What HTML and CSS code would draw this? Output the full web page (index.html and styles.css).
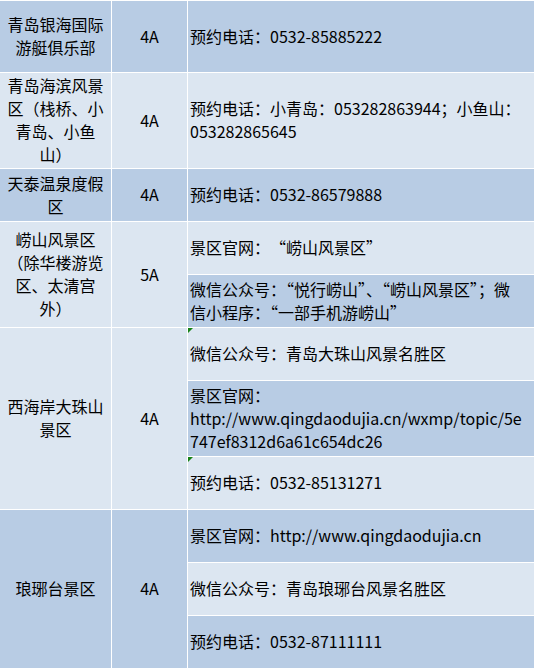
FILE: index.html
```html
<!DOCTYPE html>
<html lang="zh-CN">
<head>
<meta charset="utf-8">
<title>青岛景区</title>
<link rel="stylesheet" href="styles.css">
</head>
<body>
<div class="sheet">
  <div class="name dark">青岛银海国际游艇俱乐部</div>
  <div class="level dark">4A</div>
  <div class="info dark">预约电话：0532-85885222</div>

  <div class="name light">青岛海滨风景区（栈桥、小青岛、小鱼山）</div>
  <div class="level light">4A</div>
  <div class="info light">预约电话：小青岛：053282863944；小鱼山：<br>053282865645</div>

  <div class="name dark">天泰温泉度假区</div>
  <div class="level dark">4A</div>
  <div class="info dark">预约电话：0532-86579888</div>

  <div class="name light span2">崂山风景区（除华楼游览区、太清宫外）</div>
  <div class="level light span2">5A</div>
  <div class="info light untrim">景区官网：“崂山风景区”</div>
  <div class="info dark">微信公众号：“悦行崂山”、“崂山风景区”；微<br>信小程序：“一部手机游崂山”</div>

  <div class="name light span3">西海岸大珠山景区</div>
  <div class="level light span3">4A</div>
  <div class="info light mark">微信公众号：青岛大珠山风景名胜区</div>
  <div class="info dark">景区官网：<br>http://www.qingdaodujia.cn/wxmp/topic/5e<br>747ef8312d6a61c654dc26</div>
  <div class="info light mark">预约电话：0532-85131271</div>

  <div class="name dark span3">琅琊台景区</div>
  <div class="level dark span3">4A</div>
  <div class="info dark">景区官网：http://www.qingdaodujia.cn</div>
  <div class="info light">微信公众号：青岛琅琊台风景名胜区</div>
  <div class="info dark">预约电话：0532-87111111</div>
</div>
</body>
</html>
```

FILE: styles.css
```css
html, body {
  margin: 0;
  padding: 0;
  background: #ffffff;
}

.sheet {
  display: grid;
  grid-template-columns: 111px 75px 346px;
  grid-template-rows: 71px 95px 52px 52px 52px 52px 75px 52px 52px 52px 52px;
  gap: 1px;
  padding: 1px 0;
  background: #ffffff;
  font-family: "Noto Sans CJK SC", "Microsoft YaHei", sans-serif;
  font-size: 16px;
  line-height: 23px;
  color: #000000;
}

.name, .level, .info {
  display: flex;
  align-items: center;
  min-width: 0;
  padding-bottom: 1px;
}

.name {
  grid-column: 1;
  justify-content: center;
  text-align: center;
  padding-left: 6px;
  padding-right: 6px;
}

.level {
  grid-column: 2;
  justify-content: center;
  text-align: center;
}

.info {
  grid-column: 3;
  padding-left: 2px;
  padding-right: 2px;
  position: relative;
}

.untrim {
  text-spacing-trim: space-all;
}

.span2 { grid-row: span 2; }
.span3 { grid-row: span 3; }

.dark { background: #b8cce4; }
.light { background: #dce6f1; }

.mark::before {
  content: "";
  position: absolute;
  left: 0;
  top: 0;
  width: 0;
  height: 0;
  border-top: 5px solid #178217;
  border-right: 5px solid transparent;
}
```
